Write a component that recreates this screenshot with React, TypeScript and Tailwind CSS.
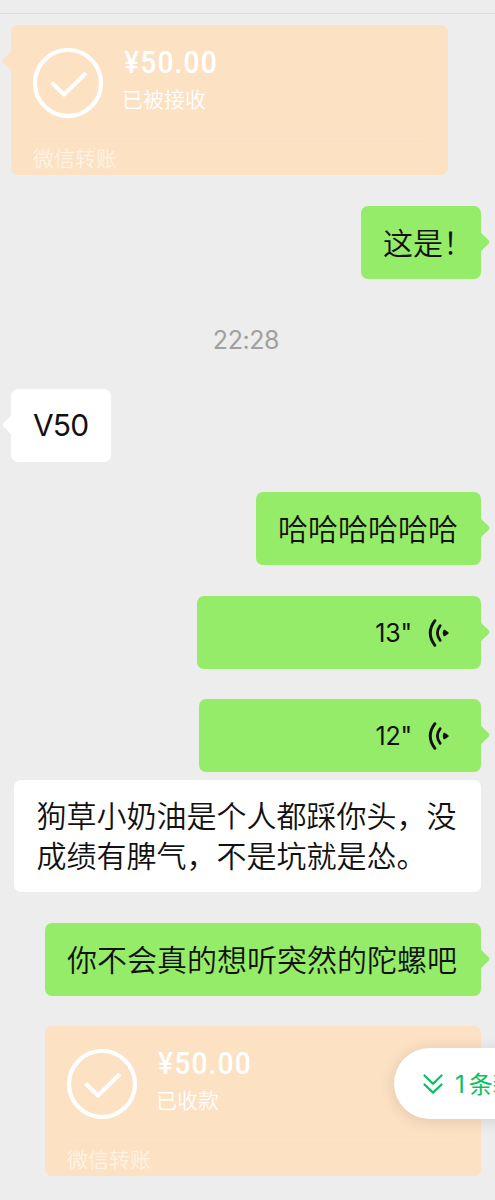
import type { ReactNode } from "react";
import clsx from "clsx";

type Side = "left" | "right";

function Tail({ side, className }: { side: Side; className: string }) {
  return (
    <svg
      viewBox="0 0 10 20"
      className={clsx(
        "absolute h-5 w-2.5",
        side === "left" ? "-left-[9px] -scale-x-100" : "-right-[9px]",
        className
      )}
      fill="currentColor"
    >
      <path d="M0 0 L1 0.8 L8.8 8.6 Q10 10 8.8 11.4 L1 19.2 L0 20 Z" />
    </svg>
  );
}

function Bubble({ side, className, children }: { side: Side; className?: string; children: ReactNode }) {
  return (
    <div
      className={clsx(
        "relative flex h-[73px] items-center rounded-[7px] px-[22px] text-[30px] leading-[40px] font-[350] whitespace-nowrap text-[#111]",
        side === "left" ? "self-start bg-white" : "self-end bg-[#95ec69]",
        className
      )}
    >
      {children}
      <Tail side={side} className={clsx("top-[26px]", side === "left" ? "text-white" : "text-[#95ec69]")} />
    </div>
  );
}

function VoiceBubble({ seconds, className }: { seconds: number; className: string }) {
  return (
    <Bubble side="right" className={clsx("justify-end", className)}>
      <span className="text-[25px] font-normal tracking-[-0.2px]">{seconds}"</span>
      <svg viewBox="0 0 22 28" className="mr-[9px] ml-[16px] h-7 w-[22px]" fill="none" stroke="currentColor" strokeLinecap="round">
        <path d="M6.9 1.7 Q-2.4 14 6.9 26.3" strokeWidth="2.9" />
        <path d="M12.2 6.6 Q6.6 14 12.2 21.4" strokeWidth="2.7" />
        <path d="M16.3 11.6 Q14.8 14 16.3 16.4 L19.8 14 Z" fill="currentColor" strokeWidth="1.8" strokeLinejoin="round" />
      </svg>
    </Bubble>
  );
}

function TransferCard({ status, side, className }: { status: string; side?: Side; className: string }) {
  return (
    <div className={clsx("relative h-[150px] rounded-[7px] bg-[#fce1c3] px-[22px] pt-[22px] text-white", className)}>
      <div className="flex h-[91px] items-start">
        <svg viewBox="0 0 70 70" className="mt-px h-[70px] w-[70px] shrink-0" fill="none" stroke="currentColor">
          <circle cx="35" cy="35" r="33" strokeWidth="4.2" />
          <path d="M18.5 34.5 L31 46.5 L53 25" strokeWidth="4.2" strokeLinejoin="round" />
        </svg>
        <div className="ml-[19px]">
          <div className="ml-[1.5px] origin-left scale-x-[0.91] font-[Roboto] text-[31px] leading-[31px] font-medium tracking-[1.3px]">¥50.00</div>
          <div className="mt-[7px] text-[21px] leading-[30px] font-[350]">{status}</div>
        </div>
      </div>
      <div className="border-t border-[#fce5cb] pt-[6px] text-[21px] leading-[28px] font-[350] text-[#fff3e6]">微信转账</div>
      {side && <Tail side={side} className="top-[26px] text-[#fce1c3]" />}
    </div>
  );
}

export default function App() {
  return (
    <div className="relative flex h-[1200px] w-[495px] flex-col overflow-hidden bg-[#ededed] pr-[14px] pl-[11px] font-[Inter,'Noto_Sans_CJK_SC',sans-serif]">
      <div className="-mr-[14px] -ml-[11px] h-[14px] shrink-0 border-b border-[#dadada]" />

      <TransferCard status="已被接收" side="left" className="mt-[11px] w-[437px] shrink-0" />
      <Bubble side="right" className="mt-[31px] w-[120px] shrink-0">这是！</Bubble>

      <div className="mt-[46px] h-[30px] shrink-0 text-center text-[25px] leading-[30px] font-normal tracking-[-0.4px] text-[#a0a0a0]">22:28</div>

      <Bubble side="left" className="mt-[34px] w-[100px] shrink-0">
        <span className="mb-[2px] font-normal tracking-[-0.9px]">V50</span>
      </Bubble>
      <Bubble side="right" className="mt-[30px] w-[225px] shrink-0">哈哈哈哈哈哈</Bubble>
      <VoiceBubble seconds={13} className="mt-[31px] w-[284px] shrink-0" />
      <VoiceBubble seconds={12} className="mt-[30px] w-[282px] shrink-0" />

      {/* Quoted text, no tail */}
      <div className="mt-[8px] h-[112px] w-[467px] shrink-0 self-end rounded-[7px] bg-white pt-[17px] pl-[22.5px] text-[30px] leading-[39.5px] font-[350] whitespace-nowrap text-[#111]">
        狗草小奶油是个人都踩你头，没
        <br />
        成绩有脾气，不是坑就是怂。
      </div>

      <Bubble side="right" className="mt-[31px] w-[436px] shrink-0">你不会真的想听突然的陀螺吧</Bubble>
      <TransferCard status="已收款" className="mt-[30px] w-[436px] shrink-0 self-end" />

      {/* New message pill, runs off the right edge */}
      <div className="absolute top-[1048px] left-[394px] flex h-[71px] w-[210px] items-center rounded-full bg-white pl-[29px] text-[24px] whitespace-nowrap text-[#07c160] shadow-[0_2px_16px_rgba(0,0,0,0.12)]">
        <svg viewBox="0 0 20 20" className="mr-[12px] h-5 w-5" fill="none" stroke="currentColor" strokeWidth="2.2" strokeLinecap="round" strokeLinejoin="round">
          <path d="M1.5 1.5 L10 9.8 L18.5 1.5 M1.5 10.5 L10 18.6 L18.5 10.5" />
        </svg>
        <span className="mt-[3px] mr-[4px]">1</span>
        <span className="mt-[3px]">条新消息</span>
      </div>
    </div>
  );
}
